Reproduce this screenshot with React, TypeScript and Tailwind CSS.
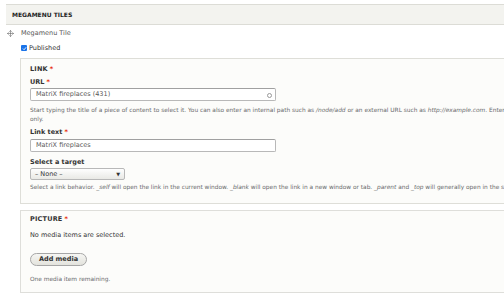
import React from 'react';
import { Move } from 'lucide-react';

function Req() {
  return <span className="text-[#e62600] ml-[2px]">*</span>;
}

function Label({ children, required }: { children: React.ReactNode; required?: boolean }) {
  return (
    <div className="h-[8px] flex items-center text-[6.5px] font-bold text-[#333] leading-none whitespace-nowrap">
      {children}
      {required && <Req />}
    </div>
  );
}

function TextInput({ value, throbber }: { value: string; throbber?: boolean }) {
  return (
    <div className="relative w-[246px] h-[13px] border border-[#b8b8b8] border-t-[#a0a0a0] rounded-[2px] bg-white flex items-center pl-[5px] text-[6.5px] text-[#595959] leading-none">
      {value}
      {throbber && (
        <span className="absolute right-[3px] top-[4px] w-[5px] h-[5px] rounded-full border border-[#999]" />
      )}
    </div>
  );
}

function Desc({ children }: { children: React.ReactNode }) {
  return <div className="h-[9px] flex items-center text-[5.85px] text-[#68696b] leading-none whitespace-nowrap">{children}</div>;
}

export default function App() {
  return (
    <div className="w-[504px] h-[301px] overflow-hidden bg-white text-[#333] font-['DejaVu_Sans',sans-serif] flex flex-col">
      {/* Details summary */}
      <div className="mt-[4px] ml-[6px] w-[600px] h-[21px] shrink-0 border-y border-[#dcdcd6] bg-[#f3f3ef] flex items-center pl-[6px] text-[6px] font-bold uppercase text-[#222] leading-none">
        Megamenu tiles
      </div>

      {/* Tile row */}
      <div className="mt-[3px] h-[10px] flex items-center pl-[7px] text-[6.5px] text-[#555] leading-none">
        <Move className="w-[7px] h-[7px] text-[#666]" strokeWidth={2} />
        <span className="ml-[7px]">Megamenu Tile</span>
      </div>

      {/* Published */}
      <div className="mt-[5px] h-[10px] flex items-center pl-[21px] text-[6.5px] text-[#333] leading-none">
        <span className="w-[6px] h-[6px] rounded-[1px] bg-[#1a73e8] flex items-center justify-center">
          <svg viewBox="0 0 10 10" className="w-[5px] h-[5px]">
            <path d="M2 5.2 L4.2 7.4 L8.2 2.6" fill="none" stroke="white" strokeWidth="1.8" />
          </svg>
        </span>
        <span className="ml-[2px]">Published</span>
      </div>

      {/* Link fieldset */}
      <div className="mt-[5px] ml-[20px] w-[600px] h-[146px] shrink-0 border border-[#deded8] bg-[#fcfcfa] pl-[9px] pt-[6px] flex flex-col">
        <Label required>
          <span className="uppercase tracking-[0.2px]">Link</span>
        </Label>
        <div className="mt-[5px]">
          <Label required>URL</Label>
        </div>
        <div className="mt-[2px]">
          <TextInput value="MatriX fireplaces (431)" throbber />
        </div>
        <div className="mt-[5px]">
          <Desc>
            Start typing the title of a piece of content to select it. You can also enter an internal path such as&nbsp;
            <em>/node/add</em>&nbsp;or an external URL such as&nbsp;<em>http://example.com</em>. Enter &lt;front&gt; to link to the front page. Enter &lt;nolink&gt; to display link text
          </Desc>
          <Desc>only.</Desc>
        </div>
        <div className="mt-[4px]">
          <Label required>Link text</Label>
        </div>
        <div className="mt-[3px]">
          <TextInput value="MatriX fireplaces" />
        </div>
        <div className="mt-[6px]">
          <Label>Select a target</Label>
        </div>
        <div className="mt-[2px] w-[95px] h-[12px] border border-[#b8b8b8] rounded-[2px] bg-gradient-to-b from-[#fefefe] to-[#e9e9e5] flex items-center justify-between pl-[4px] pr-[4px] text-[6.5px] text-[#333] leading-none">
          <span>– None –</span>
          <span className="text-[5px] text-[#333]">▼</span>
        </div>
        <div className="mt-[3px]">
          <Desc>
            Select a link behavior.&nbsp;<em>_self</em>&nbsp;will open the link in the current window.&nbsp;<em>_blank</em>&nbsp;will open the link in a new window or tab.&nbsp;<em>_parent</em>&nbsp;and&nbsp;<em>_top</em>&nbsp;will generally open in the same or parent window.
          </Desc>
        </div>
      </div>

      {/* Picture fieldset */}
      <div className="mt-[6px] ml-[20px] w-[600px] h-[83px] shrink-0 border border-[#dededa] bg-[#fcfcfa] pl-[9px] pt-[4px] flex flex-col">
        <Label required>
          <span className="uppercase tracking-[0.2px]">Picture</span>
        </Label>
        <div className="mt-[8px] h-[8px] flex items-center text-[6.5px] text-[#333] leading-none">No media items are selected.</div>
        <button className="mt-[14px] w-[57px] h-[13px] rounded-full border border-[#a6a6a6] bg-gradient-to-b from-[#f6f6f3] to-[#e3e3dd] text-[6.5px] font-bold text-[#333] leading-none flex items-center justify-center">
          Add media
        </button>
        <div className="mt-[10px] h-[8px] flex items-center text-[5.85px] text-[#68696b] leading-none">One media item remaining.</div>
      </div>
    </div>
  );
}
